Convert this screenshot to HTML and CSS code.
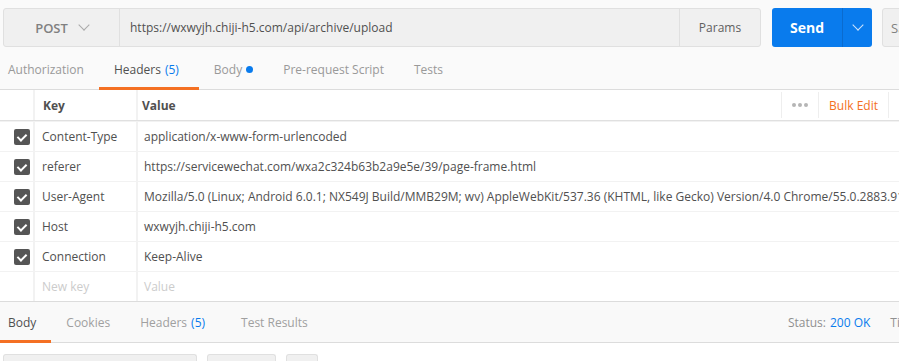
FILE: index.html
```html
<!DOCTYPE html>
<html lang="en">
<head>
    <meta charset="UTF-8">
    <title>Request - Headers</title>
    <link rel="stylesheet" href="styles.css">
</head>
<body>
    <div class="url-bar">
        <div class="url-box">
            <div class="method">POST <span class="chev"></span></div>
            <div class="url">https://wxwyjh.chiji-h5.com/api/archive/upload</div>
            <div class="params">Params</div>
        </div>
        <div class="send">
            <span class="send-label">Send</span>
            <span class="send-more"><span class="chev chev-white"></span></span>
        </div>
        <div class="save">Save</div>
    </div>

    <div class="tabs">
        <div class="tab">Authorization</div>
        <div class="tab active">Headers <span class="count">(5)</span></div>
        <div class="tab">Body <span class="dot"></span></div>
        <div class="tab">Pre-request Script</div>
        <div class="tab">Tests</div>
    </div>

    <div class="table">
        <div class="row head">
            <div class="cell check"></div>
            <div class="cell key">Key</div>
            <div class="cell value">
                Value
                <div class="head-tools">
                    <span class="more"><i></i><i></i><i></i></span>
                    <span class="bulk">Bulk Edit</span>
                </div>
            </div>
        </div>
        <div class="row">
            <div class="cell check"><span class="box"></span></div>
            <div class="cell key">Content-Type</div>
            <div class="cell value">application/x-www-form-urlencoded</div>
        </div>
        <div class="row">
            <div class="cell check"><span class="box"></span></div>
            <div class="cell key">referer</div>
            <div class="cell value">https://servicewechat.com/wxa2c324b63b2a9e5e/39/page-frame.html</div>
        </div>
        <div class="row">
            <div class="cell check"><span class="box"></span></div>
            <div class="cell key">User-Agent</div>
            <div class="cell value">Mozilla/5.0 (Linux; Android 6.0.1; NX549J Build/MMB29M; wv) AppleWebKit/537.36 (KHTML, like Gecko) Version/4.0 Chrome/55.0.2883.91 Mobile Safari/537.36</div>
        </div>
        <div class="row">
            <div class="cell check"><span class="box"></span></div>
            <div class="cell key">Host</div>
            <div class="cell value">wxwyjh.chiji-h5.com</div>
        </div>
        <div class="row">
            <div class="cell check"><span class="box"></span></div>
            <div class="cell key">Connection</div>
            <div class="cell value">Keep-Alive</div>
        </div>
        <div class="row new">
            <div class="cell check"></div>
            <div class="cell key">New key</div>
            <div class="cell value">Value</div>
        </div>
    </div>

    <div class="response-bar">
        <div class="rtabs">
            <div class="rtab active">Body</div>
            <div class="rtab">Cookies</div>
            <div class="rtab">Headers <span class="count">(5)</span></div>
            <div class="rtab">Test Results</div>
        </div>
        <div class="status">
            <span>Status:</span> <span class="ok">200 OK</span>
            <span class="time">Time:</span>
        </div>
    </div>

    <div class="response-tools">
        <div class="tool wide"></div>
        <div class="tool mid"></div>
        <div class="tool small"></div>
    </div>
</body>
</html>
```

FILE: styles.css
```css
body {
    margin: 0;
    font-family: 'Open Sans', 'Liberation Sans', sans-serif;
    font-size: 12px;
    color: #505050;
    background: #fafafa;
    overflow: hidden;
    width: 899px;
    height: 361px;
}

.url-bar {
    display: flex;
    padding: 8px 0 0 3px;
    height: 39px;
    white-space: nowrap;
}

.url-bar > div {
    flex-shrink: 0;
}

.url-box {
    display: flex;
    width: 758px;
    border: 1px solid #e0e0e0;
    border-radius: 3px;
    background: #f0f0f0;
    box-sizing: border-box;
}

.method {
    width: 115px;
    display: flex;
    align-items: center;
    justify-content: center;
    gap: 12px;
    font-size: 13px;
    font-weight: 600;
    color: #808080;
    border-right: 1px solid #e0e0e0;
}

.chev {
    width: 7px;
    height: 7px;
    border-right: 1px solid #aaa;
    border-bottom: 1px solid #aaa;
    transform: rotate(45deg);
    margin-top: -5px;
}

.chev-white {
    border-color: #cfe3fb;
}

.url {
    flex: 1;
    display: flex;
    align-items: center;
    padding-left: 10px;
    color: #505050;
}

.params {
    width: 80px;
    display: flex;
    align-items: center;
    justify-content: center;
    border-left: 1px solid #e0e0e0;
    color: #606060;
}

.send {
    display: flex;
    margin-left: 11px;
    width: 100px;
    background: #097bed;
    border-radius: 3px;
    color: #fff;
}

.send-label {
    width: 70px;
    display: flex;
    align-items: center;
    justify-content: center;
    font-weight: 700;
    font-size: 14px;
}

.send-more {
    flex: 1;
    display: flex;
    align-items: center;
    justify-content: center;
    border-left: 1px solid #0a6bcf;
}

.save {
    margin-left: 10px;
    width: 80px;
    display: flex;
    align-items: center;
    padding-left: 8px;
    border: 1px solid #e0e0e0;
    border-radius: 3px;
    background: #f0f0f0;
    color: #808080;
    font-size: 13px;
}

.tabs {
    display: flex;
    height: 43px;
    margin-left: -7px;
    border-bottom: 1px solid #dcdcdc;
    box-sizing: border-box;
}

.tab {
    padding: 0 15px;
    display: flex;
    align-items: center;
    gap: 4px;
    color: #999;
    border-bottom: 3px solid transparent;
    padding-top: 4px;
    margin-bottom: -1px;
}

.tab.active {
    color: #505050;
    border-bottom-color: #f47023;
    padding-right: 20px;
}

.count {
    color: #097bed;
}

.dot {
    width: 7px;
    height: 7px;
    border-radius: 50%;
    background: #097bed;
}

.table {
    background: #f2f2f2;
    display: flex;
    flex-direction: column;
    gap: 1px;
    border-bottom: 1px solid #dcdcdc;
}

.row {
    display: flex;
    gap: 2px;
    height: 29px;
}

.row.head {
    height: 30px;
    border-bottom: 1px solid #e0e0e0;
}

.cell {
    background: #fff;
    display: flex;
    align-items: center;
    white-space: nowrap;
    overflow: hidden;
}

.check {
    width: 33px;
    padding-left: 14px;
    box-sizing: border-box;
}

.key {
    width: 101px;
    padding-left: 7px;
    box-sizing: border-box;
}

.value {
    flex: 1;
    padding-left: 6px;
}

.head .key, .head .value {
    font-weight: 700;
    color: #505050;
}

.head .key {
    padding-left: 8px;
}

.head .value {
    padding-left: 4px;
    position: relative;
}

.head-tools {
    position: absolute;
    right: 10px;
    top: 0;
    bottom: 0;
    display: flex;
    align-items: center;
    font-weight: 400;
}

.more {
    display: flex;
    gap: 2px;
    padding: 0 10px;
    height: 26px;
    align-items: center;
    border-left: 1px solid #eee;
    border-right: 1px solid #eee;
}

.more i {
    width: 4px;
    height: 4px;
    border-radius: 50%;
    background: #b5b5b5;
}

.bulk {
    color: #f47023;
    padding: 0 10px;
    height: 26px;
    display: flex;
    align-items: center;
    border-right: 1px solid #eee;
}

.box {
    width: 16px;
    height: 16px;
    border-radius: 2px;
    background: #555;
    position: relative;
    flex-shrink: 0;
}

.box::after {
    content: "";
    position: absolute;
    left: 5px;
    top: 3px;
    width: 4px;
    height: 7px;
    border-right: 2px solid #fff;
    border-bottom: 2px solid #fff;
    transform: rotate(45deg);
}

.new .cell {
    color: #ccc;
}

.response-bar {
    display: flex;
    justify-content: space-between;
    height: 41px;
    background: #f9f9f9;
    border-bottom: 1px solid #dcdcdc;
    box-sizing: border-box;
}

.rtabs {
    display: flex;
}

.rtab {
    padding: 2px 15px 0;
    display: flex;
    align-items: center;
    gap: 4px;
    color: #a0a0a0;
    border-bottom: 3px solid transparent;
    margin-bottom: -1px;
}

.rtab:first-child {
    padding-left: 8px;
}

.rtab:last-child {
    padding-left: 21px;
}

.rtab.active {
    color: #505050;
    border-bottom-color: #f47023;
}

.status {
    display: flex;
    align-items: center;
    gap: 4px;
    color: #909090;
    margin-right: -22px;
    white-space: nowrap;
}

.status .ok {
    color: #097bed;
}

.status .time {
    margin-left: 16px;
}

.response-tools {
    display: flex;
    gap: 10px;
    padding: 11px 0 0 3px;
    background: #fff;
    height: 20px;
}

.tool {
    background: #f0f0f0;
    border: 1px solid #e0e0e0;
    border-bottom: none;
    border-radius: 3px 3px 0 0;
}

.tool.wide {
    width: 192px;
}

.tool.mid {
    width: 67px;
}

.tool.small {
    width: 30px;
}
```
